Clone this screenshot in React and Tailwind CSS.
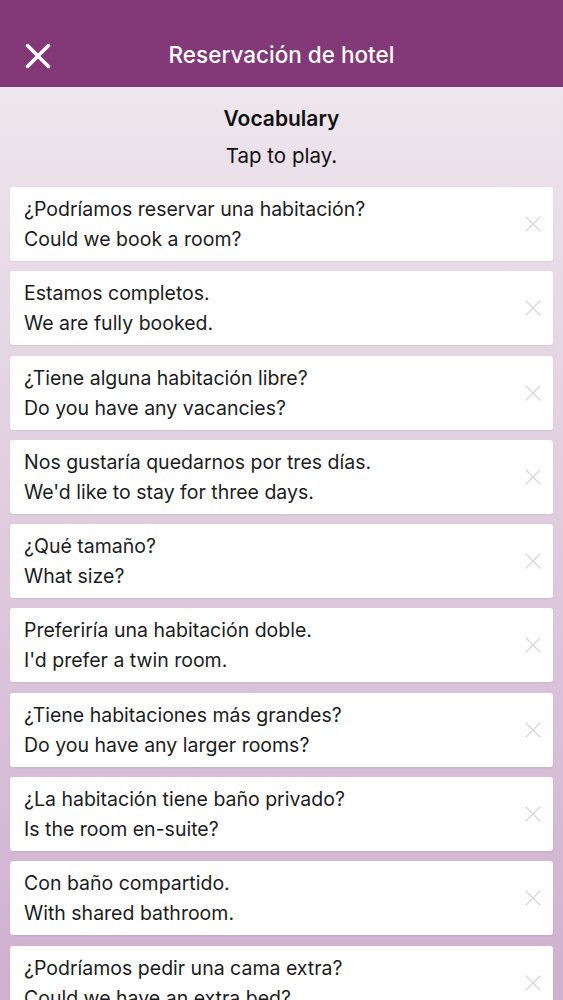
import { X } from "lucide-react";

const phrases = [
  ["¿Podríamos reservar una habitación?", "Could we book a room?"],
  ["Estamos completos.", "We are fully booked."],
  ["¿Tiene alguna habitación libre?", "Do you have any vacancies?"],
  ["Nos gustaría quedarnos por tres días.", "We'd like to stay for three days."],
  ["¿Qué tamaño?", "What size?"],
  ["Preferiría una habitación doble.", "I'd prefer a twin room."],
  ["¿Tiene habitaciones más grandes?", "Do you have any larger rooms?"],
  ["¿La habitación tiene baño privado?", "Is the room en-suite?"],
  ["Con baño compartido.", "With shared bathroom."],
  ["¿Podríamos pedir una cama extra?", "Could we have an extra bed?"],
];

const PhraseCard = ({ es, en }) => (
  <div className="flex items-center justify-between h-[74px] shrink-0 bg-white rounded-[3px] shadow-[0_1px_2px_rgba(0,0,0,0.06)] pl-[14px] pr-[6px]">
    <div className="flex flex-col gap-[4px] text-[19.5px] leading-[26px] text-[#1c1c1e]">
      <span>{es}</span>
      <span>{en}</span>
    </div>
    <X size={28} strokeWidth={1} className="text-[#d6d6d6]" />
  </div>
);

export default function App() {
  return (
    <div
      className="h-[1000px] overflow-hidden bg-gradient-to-b from-[#f1ebf0] to-[#cfb0cf]"
      style={{ fontFamily: "Inter, 'Noto Sans', sans-serif" }}
    >
      <header className="h-[87px] bg-[#833877] flex items-end pb-[10px] px-[17px] relative">
        <X size={42} strokeWidth={2} className="text-white" />
        <h1 className="absolute left-0 right-0 bottom-[15px] text-center text-white text-[22.5px] font-medium pointer-events-none">
          Reservación de hotel
        </h1>
      </header>

      <div className="flex flex-col items-center pt-[18px] pb-[17px] text-[#111]">
        <h2 className="text-[21px] font-semibold leading-[28px]">Vocabulary</h2>
        <p className="text-[20.5px] leading-[28px] mt-[9px]">Tap to play.</p>
      </div>

      <div className="flex flex-col gap-[10.3px] px-[10px]">
        {phrases.map(([es, en]) => (
          <PhraseCard key={es} es={es} en={en} />
        ))}
      </div>
    </div>
  );
}
